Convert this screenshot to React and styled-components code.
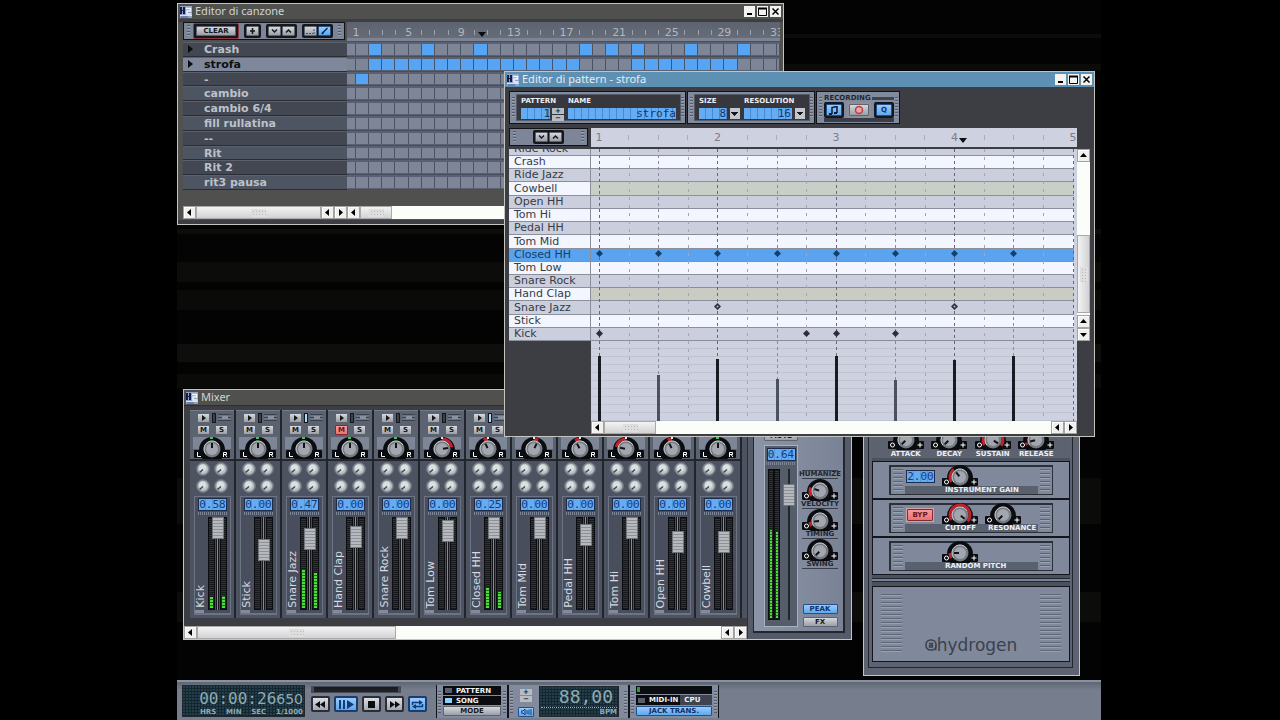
import {useState} from "react"
import styled, {createGlobalStyle, css} from "styled-components"

const COLORS = {
  ink: "#15171c",
  body: "#3d3e43",
  steel: "#7c8698",
  steelDark: "#4d5361",
  edge: "#c3c5be",
  blue: "#56a5f4",
  lcd: "#64adf5",
  lcdInk: "#143a72",
  pale: "#cdd1e0",
  white: "#f3f6fe",
  paper: "#fbfef8",
}

const SONG_ROWS = [
  {name: "Crash", cells: [1, 5, 9, 17, 19, 21, 25, 29], arrow: true},
  {name: "strofa", cells: [...range(1, 17), ...range(21, 29)], arrow: true},
  {name: "-", cells: [0]},
  {name: "cambio", cells: []},
  {name: "cambio 6/4", cells: []},
  {name: "fill rullatina", cells: []},
  {name: "--", cells: []},
  {name: "Rit", cells: []},
  {name: "Rit 2", cells: []},
  {name: "rit3 pausa", cells: []},
]

const INSTRUMENTS = [
  {name: "Ride Rock"},
  {name: "Crash"},
  {name: "Ride Jazz"},
  {name: "Cowbell", tint: "#c8cfc7"},
  {name: "Open HH"},
  {name: "Tom Hi"},
  {name: "Pedal HH"},
  {name: "Tom Mid"},
  {name: "Closed HH", selected: true, notes: [0, 2, 4, 6, 8, 10, 12, 14]},
  {name: "Tom Low"},
  {name: "Snare Rock"},
  {name: "Hand Clap", tint: "#cacbc3"},
  {name: "Snare Jazz", hollow: true, notes: [4, 12]},
  {name: "Stick"},
  {name: "Kick", notes: [0, 7, 8, 10]},
]

const VELOCITIES = [65, 46, 62, 42, 65, 41, 61, 65]

const STRIPS = [
  {name: "Kick", peak: "0.58", fader: 100, meter: [11, 12], pan: 0},
  {name: "Stick", peak: "0.00", fader: 69, meter: [0, 0], pan: 0},
  {name: "Snare Jazz", peak: "0.47", fader: 85, meter: [38, 35], pan: 0, lit: true},
  {name: "Hand Clap", peak: "0.00", fader: 88, meter: [0, 0], pan: 0, muted: true},
  {name: "Snare Rock", peak: "0.00", fader: 100, meter: [0, 0], pan: 0},
  {name: "Tom Low", peak: "0.00", fader: 96, meter: [0, 0], pan: 80},
  {name: "Closed HH", peak: "0.25", fader: 100, meter: [20, 16], pan: -26, lit: true},
  {name: "Tom Mid", peak: "0.00", fader: 100, meter: [0, 0], pan: 26},
  {name: "Pedal HH", peak: "0.00", fader: 90, meter: [0, 0], pan: -30},
  {name: "Tom Hi", peak: "0.00", fader: 100, meter: [0, 0], pan: -78},
  {name: "Open HH", peak: "0.00", fader: 81, meter: [0, 0], pan: -26},
  {name: "Cowbell", peak: "0.00", fader: 81, meter: [0, 0], pan: 0},
]

function range(from, to) {
  return Array.from({length: to - from}, (_, i) => from + i)
}

// point on a circle, 0deg is straight up
function polar(cx, cy, r, deg) {
  const a = ((deg - 90) * Math.PI) / 180
  return [cx + r * Math.cos(a), cy + r * Math.sin(a)]
}

function arc(cx, cy, r, from, to) {
  const [x1, y1] = polar(cx, cy, r, Math.min(from, to))
  const [x2, y2] = polar(cx, cy, r, Math.max(from, to))
  const large = Math.abs(to - from) > 180 ? 1 : 0
  return `M${x1} ${y1}A${r} ${r} 0 ${large} 1 ${x2} ${y2}`
}

function Knob({label, value, pan}) {
  const [x1, y1] = polar(19, 12, 1, value)
  const [x2, y2] = polar(19, 12, 6, value)
  return (
    <KnobBox>
      <svg width="38" height="22" viewBox="0 0 38 22" aria-hidden="true">
        <circle cx="19" cy="13" r="13" fill="#0b0c0f" />
        <rect x="1" y="13" width="9" height="8" rx="1" fill="#0b0c0f" />
        <rect x="28" y="13" width="9" height="8" rx="1" fill="#0b0c0f" />
        {value !== (pan ? 0 : -135) && (
          <path d={arc(19, 12, 10, pan ? 0 : -120, value)} fill="none" stroke="#c3202c" strokeWidth="3" />
        )}
        {pan && value === 0 && <rect x="17" y="0" width="3" height="2" fill="#38d048" />}
        {pan && value !== 0 && <rect x="18" y="0" width="2" height="2" fill="#e8e8e8" />}
        <circle cx="19" cy="12" r="8.500" fill="#767b83" />
        <path d={arc(19, 12, 8, -130, 60)} fill="none" stroke="#c6cad0" strokeWidth="1" />
        <circle cx="19" cy="12" r="6" fill="#a2a7af" />
        <path d={`M${x1} ${y1}L${x2} ${y2}`} stroke="#101216" strokeWidth="2" />
        {pan ? (
          <g fill="none" stroke="#fff" strokeWidth="1">
            <path d="M4.500 15v4.500h3.500" />
            <path d="M30.500 20v-4.500h3v2h-3M32 17.500l2 2.500" />
          </g>
        ) : (
          <g fill="none" stroke="#fff" strokeWidth="1">
            <circle cx="5.500" cy="17" r="2" />
            <path d="M30.500 17h5M33 14.500v5" />
          </g>
        )}
      </svg>
      <KnobInput type="range" min="-135" max="135" defaultValue={value} aria-label={label} />
    </KnobBox>
  )
}

function SmallKnob({label}) {
  return (
    <SmallKnobBox>
      <svg width="14" height="14" viewBox="0 0 14 14" aria-hidden="true">
        <circle cx="7" cy="7" r="6.500" fill="#8b929a" stroke="#6b717b" />
        <circle cx="7" cy="7" r="5" fill="#bcc3c6" />
        <circle cx="6.500" cy="6" r="3.500" fill="#dbe0e1" />
        <path d="M3.500 10.500l3.500-3" stroke="#3c424c" strokeWidth="1.500" />
      </svg>
      <KnobInput type="range" min="0" max="100" defaultValue={0} aria-label={label} />
    </SmallKnobBox>
  )
}

function AppMark() {
  return (
    <svg width="12" height="12" viewBox="0 0 12 12" aria-hidden="true">
      <rect width="12" height="12" fill="#8fa3c8" />
      <path d="M0 1h2v3h1V1h2v7H3V5H2v3H0z" fill="#141c48" />
      <path d="M6 2.500h4.500v2.500H7v3h4.500" stroke="#f4f7ff" strokeWidth="1.500" fill="none" />
      <path d="M0 9.500h12" stroke="#dbe3f2" strokeWidth="1" />
      <path d="M1 11h7" stroke="#4c5f90" strokeWidth="1" />
    </svg>
  )
}

function Caption({title, active, controls}) {
  return (
    <TitleBar $active={active}>
      <AppMark />
      <TitleText>{title}</TitleText>
      {controls && (
        <TitleControls>
          <TitleButton aria-label="Minimize">
            <svg width="11" height="11">
              <path d="M3 8h5" stroke="#000" strokeWidth="2" />
            </svg>
          </TitleButton>
          <TitleButton aria-label="Maximize">
            <svg width="11" height="11">
              <path d="M1 2.500h9" stroke="#000" strokeWidth="2" />
              <path d="M1.500 2v7.500h8V2" fill="none" stroke="#000" />
            </svg>
          </TitleButton>
          <TitleButton aria-label="Close">
            <svg width="11" height="11">
              <path d="M2.500 2.500l6 6M8.500 2.500l-6 6" stroke="#000" strokeWidth="1.500" />
            </svg>
          </TitleButton>
        </TitleControls>
      )}
    </TitleBar>
  )
}

const ARROWS = {
  left: "M8 3v7L4 6.500z",
  right: "M5 3v7l4-3.500z",
  up: "M3 8h7L6.500 4z",
  down: "M3 5h7L6.500 9z",
}

function ScrollArrow({dir}) {
  return (
    <ScrollButton aria-label={`Scroll ${dir}`}>
      <svg width="13" height="13" viewBox="0 0 13 13">
        <path d={ARROWS[dir]} fill="#000" />
      </svg>
    </ScrollButton>
  )
}

function ScrollBar({before = 0, thumb, vertical}) {
  return (
    <ScrollTrack $vertical={vertical}>
      <ScrollArrow dir={vertical ? "up" : "left"} />
      <ScrollGap $size={before} />
      <ScrollThumb $size={thumb} $vertical={vertical}>
        <Grip $vertical={vertical} />
      </ScrollThumb>
      <ScrollFill />
      <ScrollArrow dir={vertical ? "up" : "left"} />
      <ScrollArrow dir={vertical ? "down" : "right"} />
    </ScrollTrack>
  )
}

function UpDown() {
  return (
    <ButtonWell>
      <PixelButton $width={13} aria-label="Move down">
        <svg width="7" height="6">
          <path d="M1 1.500l2.500 2.500l2.500-2.500" fill="none" stroke="#15171c" strokeWidth="1.500" />
        </svg>
      </PixelButton>
      <PixelButton $width={13} aria-label="Move up">
        <svg width="7" height="6">
          <path d="M1 4.500l2.500-2.500l2.500 2.500" fill="none" stroke="#15171c" strokeWidth="1.500" />
        </svg>
      </PixelButton>
    </ButtonWell>
  )
}

function SongEditor() {
  const [selected, setSelected] = useState("strofa")
  return (
    <SongWindow>
      <Caption title="Editor di canzone" controls />
      <SongBody>
        <SongTools>
          <ButtonWell $red>
            <PixelButton $width={40}>CLEAR</PixelButton>
          </ButtonWell>
          <ButtonWell>
            <PixelButton $width={13} aria-label="New pattern">
              <svg width="7" height="6">
                <path d="M3.500 0v6M1 3h5" stroke="#15171c" strokeWidth="1.500" />
              </svg>
            </PixelButton>
          </ButtonWell>
          <UpDown />
          <ButtonWell>
            <PixelButton $width={13} aria-label="Select mode">
              <svg width="9" height="7">
                <path d="M0 5.500h7M8 1v5" stroke="#4a505c" strokeDasharray="2 1" />
              </svg>
            </PixelButton>
            <PixelButton $width={13} $on aria-label="Draw mode">
              <svg width="9" height="8">
                <path d="M7.500 1L3.500 5" stroke="#0d2550" strokeWidth="1.500" />
                <path d="M3.500 5L2 7" stroke="#0d2550" strokeWidth="2" />
              </svg>
            </PixelButton>
          </ButtonWell>
        </SongTools>
        <SongRuler>
          <i />
          {range(0, 33).map((i) => (
            <RulerCell key={i}>
              {i % 4 === 0 ? <RulerNumber>{i + 1}</RulerNumber> : <RulerTick />}
              {i === 9 && <Playhead />}
            </RulerCell>
          ))}
        </SongRuler>
        <SongNames>
          {SONG_ROWS.map((row) => (
            <SongName key={row.name} $selected={row.name === selected} onClick={() => setSelected(row.name)}>
              <svg width="8" height="8">
                {row.arrow && <path d="M2 0v8l5-4z" fill="#0b0c0f" />}
              </svg>
              {row.name}
            </SongName>
          ))}
        </SongNames>
        <SongGrid>
          {SONG_ROWS.map((row) => (
            <SongLine key={row.name}>
              <SongCell />
              {range(0, 32).map((i) => (
                <SongCell key={i} $on={row.cells.includes(i)} />
              ))}
              <SongCell />
            </SongLine>
          ))}
        </SongGrid>
        <i />
        <i />
        <ScrollBar thumb={125} />
        <ScrollBar thumb={32} />
      </SongBody>
    </SongWindow>
  )
}

const STEP = 29.6
const BEAT_START = 8

function PatternLines({height}) {
  return (
    <Overlay width="100%" height={height} aria-hidden="true">
      {range(0, 17).map((i) => (
        <path
          key={i}
          d={`M${Math.round(BEAT_START + i * STEP) + 0.5} 0V${height}`}
          stroke={i % 4 === 0 ? "#67657f" : i % 2 === 0 ? "#8b899e" : "#a5a4b6"}
          strokeDasharray={i % 2 === 0 ? "3 3" : "3 5"}
        />
      ))}
    </Overlay>
  )
}

function PatternEditor() {
  return (
    <PatternWindow>
      <Caption title="Editor di pattern - strofa" active controls />
      <PatternBody>
        <PatternTools>
          <Rack>
            <RackInset>
              <Field>
                <PixelLabel htmlFor="pattern-number">PATTERN</PixelLabel>
                <FieldRow>
                  <LcdInput id="pattern-number" $width={29} defaultValue="1" />
                  <Spinner />
                </FieldRow>
              </Field>
              <Field>
                <PixelLabel htmlFor="pattern-name">NAME</PixelLabel>
                <LcdInput id="pattern-name" $width={108} defaultValue="strofa" />
              </Field>
            </RackInset>
          </Rack>
          <Rack>
            <RackInset>
              <Field>
                <PixelLabel htmlFor="size">SIZE</PixelLabel>
                <LcdSelect id="size" $width={41}>
                  <option>8</option>
                </LcdSelect>
              </Field>
              <Field>
                <PixelLabel htmlFor="resolution">RESOLUTION</PixelLabel>
                <LcdSelect id="resolution" $width={61}>
                  <option>16</option>
                </LcdSelect>
              </Field>
            </RackInset>
          </Rack>
          <Rack>
            <Recording>
              <RecordingTitle>RECORDING</RecordingTitle>
              <RecordingButtons>
                <ButtonWell>
                  <PixelButton $width={16} $tall $on aria-label="Hear new notes">
                    <svg width="10" height="9">
                      <path d="M3 8V1.500l5-1V7" fill="none" stroke="#0b1838" strokeWidth="1.500" />
                      <path d="M0 7h3v2H0zM5 6h3v2H5z" fill="#0b1838" />
                    </svg>
                  </PixelButton>
                </ButtonWell>
                <ButtonWell $light>
                  <PixelButton $width={20} $tall aria-label="Record">
                    <svg width="10" height="10">
                      <circle cx="5" cy="5" r="3.500" fill="#e2a9ac" stroke="#c43a44" strokeWidth="1.500" />
                    </svg>
                  </PixelButton>
                </ButtonWell>
                <ButtonWell>
                  <PixelButton $width={16} $tall $on>
                    Q
                  </PixelButton>
                </ButtonWell>
              </RecordingButtons>
            </Recording>
          </Rack>
        </PatternTools>
        <PatternGrid>
          <PatternMove>
            <UpDown />
          </PatternMove>
          <PatternRuler>
            {range(0, 17).map((i) => (
              <RulerCell key={i}>
                {i % 4 === 0 ? <RulerNumber $dark>{i / 4 + 1}</RulerNumber> : <RulerTick $dark />}
                {i === 12 && <Playhead />}
              </RulerCell>
            ))}
          </PatternRuler>
          <i />
          <InstrumentRows>
            {INSTRUMENTS.map((ins, i) => (
              <InstrumentName key={ins.name} $odd={i % 2 === 1} $selected={ins.selected}>
                {ins.name}
              </InstrumentName>
            ))}
          </InstrumentRows>
          <NoteArea>
            {INSTRUMENTS.map((ins, i) => (
              <NoteRow key={ins.name} $odd={i % 2 === 1} $selected={ins.selected} $tint={ins.tint} />
            ))}
            <PatternLines height={192} />
            <Overlay width="100%" height="192" aria-hidden="true">
              {INSTRUMENTS.map((ins, row) =>
                (ins.notes || []).map((n) => {
                  const x = Math.round(BEAT_START + n * STEP)
                  const y = Math.round(6 + (row - 1) * 13.2 + 6)
                  return (
                    <g key={`${row}-${n}`}>
                      <path
                        d={`M${x - 3} ${y + 0.5}l3.500-3.500l3.500 3.500l-3.500 3.500z`}
                        fill={ins.selected ? "#14406e" : "#2b2e3c"}
                      />
                      {ins.hollow && <circle cx={x + 0.5} cy={y + 0.5} r="1" fill="#b9bcd0" />}
                    </g>
                  )
                }),
              )}
            </Overlay>
          </NoteArea>
          <ScrollBar vertical before={73} thumb={78} />
          <i />
          <VelocityArea>
            <PatternLines height={80} />
            <Overlay width="100%" height="80" aria-hidden="true">
              {VELOCITIES.map((v, i) => (
                <rect
                  key={i}
                  x={Math.round(BEAT_START + i * 2 * STEP) - 1}
                  y={80 - v}
                  width="3"
                  height={v}
                  fill={v > 50 ? "#171b22" : "#4a525d"}
                />
              ))}
            </Overlay>
          </VelocityArea>
          <i />
          <i />
          <ScrollBar thumb={52} />
        </PatternGrid>
      </PatternBody>
    </PatternWindow>
  )
}

function Spinner() {
  return (
    <SpinnerBox>
      <SpinButton aria-label="Increase">+</SpinButton>
      <SpinButton aria-label="Decrease">−</SpinButton>
    </SpinnerBox>
  )
}

function ChannelStrip({strip}) {
  return (
    <Strip>
      <StripTop>
        <StripButtons>
          <PixelButton $width={13} aria-label={`Play ${strip.name}`}>
            <svg width="5" height="6">
              <path d="M1 0v6l4-3z" fill="#15171c" />
            </svg>
          </PixelButton>
          <Led $on={strip.lit} />
          <Vent />
        </StripButtons>
        <StripButtons $spread>
          <PixelButton $width={13} $red={strip.muted}>
            M
          </PixelButton>
          <PixelButton $width={13}>S</PixelButton>
        </StripButtons>
        <PanArea>
          <Knob pan value={strip.pan} label={`Pan ${strip.name}`} />
        </PanArea>
      </StripTop>
      <SendKnobs>
        {range(1, 5).map((n) => (
          <SmallKnob key={n} label={`${strip.name} send ${n}`} />
        ))}
      </SendKnobs>
      <FaderFrame>
        <Lcd>{strip.peak}</Lcd>
        <Dots />
        <FaderRow>
          <StripName>{strip.name}</StripName>
          <MeterPair>
            <Meter>
              <MeterLevel style={{height: strip.meter[0]}} />
            </Meter>
            <Meter>
              <MeterLevel style={{height: strip.meter[1]}} />
            </Meter>
            <Fader type="range" defaultValue={strip.fader} aria-label={`Volume ${strip.name}`} />
          </MeterPair>
        </FaderRow>
      </FaderFrame>
    </Strip>
  )
}

function Mixer() {
  return (
    <MixerWindow>
      <Caption title="Mixer" />
      <MixerBody>
        <MixerMain>
          <Strips>
            {STRIPS.map((strip) => (
              <ChannelStrip key={strip.name} strip={strip} />
            ))}
          </Strips>
          <ScrollBar thumb={199} />
        </MixerMain>
        <MasterFrame>
          <MasterPanel>
            <MasterLeft>
              <PixelButton $width={34}>MUTE</PixelButton>
              <MasterFader>
                <Lcd>0.64</Lcd>
                <Dots />
                <MasterMeters>
                  <Meter $tall>
                    <MeterLevel style={{height: 88}} />
                  </Meter>
                  <Meter $tall>
                    <MeterLevel style={{height: 86}} />
                  </Meter>
                  <MasterSlot>
                    <Fader $tall type="range" defaultValue={88} aria-label="Master volume" />
                  </MasterSlot>
                </MasterMeters>
              </MasterFader>
            </MasterLeft>
            <MasterRight>
              <HumanLabel $first>HUMANIZE</HumanLabel>
              <Knob value={-70} label="Humanize velocity" />
              <HumanLabel>VELOCITY</HumanLabel>
              <Knob value={-95} label="Humanize timing" />
              <HumanLabel>TIMING</HumanLabel>
              <Knob value={-135} label="Swing" />
              <HumanLabel>SWING</HumanLabel>
              <MasterButtons>
                <PixelButton $width={35} $on>
                  PEAK
                </PixelButton>
                <PixelButton $width={35}>FX</PixelButton>
              </MasterButtons>
            </MasterRight>
          </MasterPanel>
        </MasterFrame>
      </MixerBody>
    </MixerWindow>
  )
}

const ENVELOPE = [
  ["ATTACK", -135],
  ["DECAY", -135],
  ["SUSTAIN", 125],
  ["RELEASE", -105],
]

function KnobField({label, value}) {
  return (
    <KnobColumn>
      <Knob value={value} label={label} />
      <UnitLabel>{label}</UnitLabel>
    </KnobColumn>
  )
}

function InstrumentEditor() {
  return (
    <InstrumentWindow>
      <InstrumentInner>
        <EnvelopeUnit>
          {ENVELOPE.map(([label, value]) => (
            <EnvelopeField key={label}>
              <Knob value={value} label={label} />
              <UnitLabel>{label}</UnitLabel>
            </EnvelopeField>
          ))}
        </EnvelopeUnit>
        <Unit>
          <UnitInset>
            <UnitSlot>
              <Lcd>2.00</Lcd>
            </UnitSlot>
            <KnobField label="INSTRUMENT GAIN" value={-40} />
          </UnitInset>
        </Unit>
        <Unit>
          <UnitInset>
            <UnitSlot>
              <BypassWell>
                <PixelButton $width={26} $tall $red>
                  BYP
                </PixelButton>
              </BypassWell>
            </UnitSlot>
            <KnobField label="CUTOFF" value={130} />
            <KnobField label="RESONANCE" value={-135} />
          </UnitInset>
        </Unit>
        <Unit>
          <UnitInset>
            <UnitSlot />
            <KnobField label="RANDOM PITCH" value={-90} />
          </UnitInset>
        </Unit>
        <Groove />
        <LogoUnit>
          <LogoVent />
          <Logo>
            <svg width="12" height="12" viewBox="0 0 12 12" aria-hidden="true">
              <rect x="1" y="1" width="10" height="10" rx="4.500" fill="none" stroke="#3b414d" strokeWidth="1.500" />
              <path d="M4 4.500h3.500V8h-3V6.300h3M10.800 6v5.500" fill="none" stroke="#3b414d" strokeWidth="1.300" />
            </svg>
            hydrogen
          </Logo>
          <LogoVent />
        </LogoUnit>
      </InstrumentInner>
    </InstrumentWindow>
  )
}

function Player() {
  const [mode, setMode] = useState("SONG")
  return (
    <PlayerBar>
      <TimeDisplay>
        <TimeDigits>
          00:00:26<small>650</small>
        </TimeDigits>
        <TimeUnits>
          <span>HRS</span>
          <span>MIN</span>
          <span>SEC</span>
          <span>1/1000</span>
        </TimeUnits>
      </TimeDisplay>
      <Transport>
        <TransportGroove />
        <TransportButtons>
          <TransportButton aria-label="Rewind">
            <svg width="11" height="7">
              <path d="M5 0v7L0 3.500zM10 0v7L5 3.500z" fill="#0b0c0f" />
            </svg>
          </TransportButton>
          <TransportButton $on $wide aria-label="Play">
            <svg width="16" height="9">
              <path d="M1 0h2v9H1zM5 0h2v9H5zM9 0v9l7-4.500z" fill="#123a78" />
            </svg>
          </TransportButton>
          <TransportButton aria-label="Stop">
            <svg width="7" height="7">
              <path d="M0 0h7v7H0z" fill="#0b0c0f" />
            </svg>
          </TransportButton>
          <TransportButton aria-label="Forward">
            <svg width="11" height="7">
              <path d="M1 0v7l5-3.500zM6 0v7l5-3.500z" fill="#0b0c0f" />
            </svg>
          </TransportButton>
          <TransportButton $on aria-label="Loop">
            <svg width="13" height="9" viewBox="0 0 13 9">
              <path d="M1.500 5V2.500H9M11.500 4v2.500H4" fill="none" stroke="#123a78" strokeWidth="1.500" />
              <path d="M8 0l4 2.500L8 5zM5 4v5L1 6.500z" fill="#123a78" />
            </svg>
          </TransportButton>
        </TransportButtons>
      </Transport>
      <PlayerRack>
        <ModeRow>
          <Lamp />
          PATTERN
        </ModeRow>
        <ModeRow>
          <Lamp $on={mode === "SONG"} />
          SONG
        </ModeRow>
        <PixelButton $width={58} onClick={() => setMode(mode === "SONG" ? "PATTERN" : "SONG")}>
          MODE
        </PixelButton>
      </PlayerRack>
      <TempoRack>
        <TempoButtons>
          <Spinner />
          <PixelButton $width={16} $on aria-label="Metronome">
            <svg width="11" height="8">
              <path d="M0 3h2l2-2v6L2 5H0zM6 2v4M8 1.500v5M10 1v6" fill="none" stroke="#123a78" />
            </svg>
          </PixelButton>
        </TempoButtons>
        <TempoDisplay>
          <TempoDigits>88,00</TempoDigits>
          <span>BPM</span>
        </TempoDisplay>
      </TempoRack>
      <PlayerRack>
        <CpuMeter>
          <i />
        </CpuMeter>
        <MidiRow>
          <MidiLamp>
            <Lamp />
            MIDI-IN
          </MidiLamp>
          CPU
        </MidiRow>
        <PixelButton $width={76} $on>
          JACK TRANS.
        </PixelButton>
      </PlayerRack>
    </PlayerBar>
  )
}

export default function App() {
  return (
    <Page>
      <GlobalStyle />
      <Desktop>
        <SongEditor />
        <Mixer />
        <InstrumentEditor />
        <PatternEditor />
        <Player />
      </Desktop>
    </Page>
  )
}

const GlobalStyle = createGlobalStyle`
  *, *::before, *::after {
    box-sizing: border-box;
  }
  body {
    margin: 0;
    background: #000;
    font-family: "DejaVu Sans", sans-serif;
    font-size: 11px;
  }
  button, input, select {
    font: inherit;
    margin: 0;
    padding: 0;
    border: 0;
  }
  svg {
    display: block;
    flex: none;
  }
`

const pixelType = css`
  font-family: "DejaVu Sans", sans-serif;
  font-size: 7px;
  font-weight: 700;
  line-height: 8px;
`

const Page = styled.main`
  padding-right: 2px;
`

const Desktop = styled.div`
  position: relative;
  display: flex;
  flex-direction: column;
  justify-content: flex-end;
  max-width: 924px;
  min-height: 100vh;
  margin: 0 auto;
  overflow: hidden;
  background: linear-gradient(
    #030303 0 34px,
    #0c0c0b 34px 38px,
    #030303 38px 64px,
    #0b0b0a 64px 70px,
    #030303 70px 229px,
    #0d0d0c 229px 234px,
    #040404 234px 262px,
    #0c0c0b 262px 282px,
    #030303 282px 290px,
    #0a0a09 290px 310px,
    #030303 310px 344px,
    #0e0e0c 344px 362px,
    #030303 362px 374px,
    #0a0a09 374px 388px,
    #030303 388px 478px,
    #0b0b0a 478px 524px,
    #030303 524px 592px,
    #0c0c0b 592px 622px,
    #030303 622px
  );
`

/* windows */

const Window = styled.section`
  position: absolute;
  border: 1px solid ${COLORS.edge};
  background: ${COLORS.body};
`

const SongWindow = styled(Window)`
  left: 0;
  top: 3px;
  width: 607px;
`

const PatternWindow = styled(Window)`
  left: 327px;
  top: 71px;
  width: 591px;
`

const MixerWindow = styled(Window)`
  left: 6px;
  top: 389px;
  width: 669px;
`

const InstrumentWindow = styled(Window)`
  left: 686px;
  top: 420px;
  width: 217px;
  padding: 0 6px 7px 4px;
  background: #5d6370;
`

const TitleBar = styled.header`
  display: flex;
  align-items: center;
  gap: 3px;
  height: 15px;
  padding: 0 2px;
  color: ${(_) => (_.$active ? "#e2edf6" : "#d2d3d0")};
  background: ${(_) => (_.$active ? "#5d90b3" : "#50514e")};
`

const TitleText = styled.h2`
  flex: 1;
  margin: 0;
  padding-bottom: 2px;
  font-family: "Noto Sans", sans-serif;
  font-size: 11px;
  line-height: 13px;
  font-weight: 400;
`

const TitleControls = styled.div`
  display: flex;
  gap: 2px;
`

const TitleButton = styled.button`
  width: 11px;
  height: 11px;
  background: #f2f3ee;
`

/* shared controls */

const ButtonWell = styled.span`
  display: flex;
  gap: 1px;
  padding: 2px;
  border-radius: 2px;
  background: ${(_) => (_.$light ? "#8b8f98" : COLORS.ink)};
  ${(_) => _.$red && "border: 1px solid #8c3644;"}
`

const PixelButton = styled.button`
  ${pixelType}
  display: flex;
  flex: none;
  justify-content: center;
  align-items: center;
  width: ${(_) => _.$width}px;
  height: ${(_) => (_.$tall ? 12 : 10)}px;
  color: ${(_) => (_.$on ? "#0f3166" : _.$red ? "#6d1118" : "#15171c")};
  background: ${(_) =>
    _.$on
      ? "linear-gradient(#9acbfb, #5ea8ee)"
      : _.$red
        ? "linear-gradient(#f79a9a, #e87474)"
        : "linear-gradient(#d5d8dd, #9a9ea6)"};
  border: 1px solid ${(_) => (_.$on ? "#24508a" : _.$red ? "#8a2830" : "#5e636d")};
  border-radius: 1px;
`

const ScrollTrack = styled.div`
  display: flex;
  flex-direction: ${(_) => (_.$vertical ? "column" : "row")};
  min-width: 0;
  height: ${(_) => (_.$vertical ? "auto" : "13px")};
  background: ${COLORS.paper};
`

const ScrollButton = styled.button`
  flex: none;
  width: 13px;
  height: 13px;
  background: #f0f0ee;
  box-shadow: inset 0 0 0 1px #a3a3a3, inset 1px 1px 0 1px #fff;
`

const ScrollGap = styled.span`
  flex: none;
  flex-basis: ${(_) => _.$size}px;
`

const ScrollThumb = styled.span`
  display: flex;
  align-items: center;
  justify-content: center;
  flex: none;
  flex-basis: ${(_) => _.$size}px;
  background: linear-gradient(${(_) => (_.$vertical ? "90deg" : "180deg")}, #f6f6f6, #cfcfd1);
  box-shadow: inset 0 0 0 1px #a9a9a9;
`

const ScrollFill = styled.span`
  flex: 1;
`

const Grip = styled.span`
  width: ${(_) => (_.$vertical ? 8 : 15)}px;
  height: ${(_) => (_.$vertical ? 15 : 8)}px;
  background: repeating-linear-gradient(#dededf 0 2px, transparent 2px 3px),
    repeating-linear-gradient(90deg, #dededf 0 2px, #b9b9bc 2px 3px);
`

const ribs = css`
  background-image: repeating-linear-gradient(#535b6a 0 1px, #98a1b1 1px 2px, transparent 2px 3px),
    repeating-linear-gradient(#535b6a 0 1px, #98a1b1 1px 2px, transparent 2px 3px);
  background-repeat: no-repeat;
`

const Rack = styled.div`
  ${ribs}
  padding: 3px 5px 3px 7px;
  border: 1px solid #101216;
  background-color: #818b9d;
  background-size: 3px 21px;
  background-position: 2px center, calc(100% - 1px) center;
`

const RackInset = styled.div`
  display: flex;
  gap: 4px;
  height: 25px;
  padding: 2px 4px;
  background: #36383e;
  box-shadow: 0 0 0 1px #565d6a;
`

const Lcd = styled.output`
  display: block;
  width: 29px;
  height: 13px;
  border: 1px solid #1c2c4a;
  background: repeating-linear-gradient(90deg, ${COLORS.lcd} 0 6px, #5398df 6px 7px);
  color: ${COLORS.lcdInk};
  font: 11px/11px "DejaVu Sans Mono", monospace;
  text-align: center;
`

const LcdInput = styled.input`
  width: ${(_) => _.$width}px;
  height: 11px;
  background: repeating-linear-gradient(90deg, ${COLORS.lcd} 0 6px, #4a88cf 6px 7px);
  color: #13376b;
  font: 11px/11px "DejaVu Sans Mono", monospace;
  text-align: right;
  border-radius: 0;
`

const LcdSelect = styled.select`
  appearance: none;
  width: ${(_) => _.$width}px;
  height: 11px;
  padding-right: 14px;
  border-radius: 0;
  background: linear-gradient(135deg, #15171c 50%, transparent 50%) calc(100% - 1px) 4px / 4px 4px no-repeat,
    linear-gradient(225deg, #15171c 50%, transparent 50%) calc(100% - 5px) 4px / 4px 4px no-repeat,
    linear-gradient(#c4c7cd, #c4c7cd) 100% 0 / 10px 11px no-repeat,
    linear-gradient(#36383e, #36383e) 100% 0 / 13px 11px no-repeat,
    repeating-linear-gradient(90deg, ${COLORS.lcd} 0 6px, #4a88cf 6px 7px);
  color: #13376b;
  font: 11px/11px "DejaVu Sans Mono", monospace;
  text-align: right;
  text-align-last: right;
`

const SpinnerBox = styled.span`
  display: flex;
  flex-direction: column;
  gap: 1px;
  width: 12px;
`

const SpinButton = styled.button`
  height: 6px;
  background: #b9bcc3;
  color: #15171c;
  font-size: 7px;
  font-weight: 700;
  line-height: 6px;
  text-align: center;
`

const KnobBox = styled.span`
  position: relative;
  display: block;
  flex: none;
  width: 38px;
  height: 22px;
`

const SmallKnobBox = styled.span`
  position: relative;
  display: block;
  width: 14px;
  height: 14px;
`

const KnobInput = styled.input`
  position: absolute;
  inset: 0;
  width: 100%;
  height: 100%;
  opacity: 0;
`

const RulerCell = styled.span`
  position: relative;
  display: flex;
  justify-content: center;
  align-items: center;
  width: 0;
`

const RulerNumber = styled.span`
  flex: none;
  font-size: 11px;
  line-height: 14px;
  color: ${(_) => (_.$dark ? "#7b7e8a" : "#b1b6c0")};
`

const RulerTick = styled.i`
  flex: none;
  width: 1px;
  height: 5px;
  background: ${(_) => (_.$dark ? "#a9adbb" : "#9ba1ad")};
`

const Playhead = styled.i`
  position: absolute;
  left: 4px;
  bottom: 4px;
  border: solid transparent;
  border-width: 5px 4px 0;
  border-top-color: #0b0c0f;
`

const Overlay = styled.svg`
  position: absolute;
  inset: 0;
`

/* song editor */

const SongBody = styled.div`
  display: grid;
  grid-template-columns: 164px minmax(0, 1fr);
  grid-template-rows: 20px 148px 16px 14px;
  padding: 3px 3px 4px 5px;
  background: linear-gradient(#3d3e43 0 3px, transparent 3px calc(100% - 4px), #3d3e43 0), #50514e;
`

const SongTools = styled.div`
  ${ribs}
  display: flex;
  align-items: center;
  gap: 5px;
  height: 18px;
  margin-right: 2px;
  padding-left: 9px;
  border: 1px solid #101216;
  background-color: ${COLORS.steel};
  background-size: 3px 12px;
  background-position: 3px center, calc(100% - 3px) center;
`

const songTracks = css`
  display: grid;
  grid-template-columns: 9px repeat(32, minmax(0, 1fr)) 3px;
`

const SongRuler = styled.div`
  ${songTracks}
  height: 19px;
  padding-top: 2px;
  overflow: hidden;
  background: linear-gradient(#5c626e, #666c78 16px, #7c8493 16px);
`

const SongNames = styled.div`
  display: grid;
  grid-template-rows: repeat(10, minmax(0, 1fr));
`

const SongName = styled.button`
  display: flex;
  align-items: center;
  gap: 10px;
  padding-left: 3px;
  border-bottom: 1px solid #2a2d35;
  border-top: 1px solid #5a606c;
  overflow: hidden;
  color: ${(_) => (_.$selected ? "#0d0f14" : "#bcc1ca")};
  background: ${(_) => (_.$selected ? "#7f889a" : "#424751")};
  font-size: 11px;
  font-weight: 700;
  text-align: left;
  &:nth-child(n + 4):nth-child(even) {
    background: #4d5462;
  }
`

const SongGrid = styled(SongNames)`
  background: #596071;
`

const SongLine = styled.div`
  ${songTracks}
  padding: 2px 0 1px;
  border-bottom: 1px solid #474d5a;
`

const SongCell = styled.i`
  border-right: 1px solid #4b5262;
  background: ${(_) => (_.$on ? COLORS.blue : "#7d8596")};
`

/* pattern editor */

const PatternBody = styled.div`
  padding: 4px 4px 1px;
`

const PatternTools = styled.div`
  display: flex;
  gap: 1px;
  height: 33px;
  margin-bottom: 4px;
`

const Field = styled.div`
  display: flex;
  flex-direction: column;
  gap: 3px;
`

const FieldRow = styled.div`
  display: flex;
  gap: 2px;
`

const PixelLabel = styled.label`
  ${pixelType}
  color: #eceef2;
`

const Recording = styled.div`
  display: flex;
  flex-direction: column;
  width: 70px;
  height: 27px;
  border-bottom: 4px solid #3a3d45;
`

const RecordingTitle = styled.span`
  ${pixelType}
  color: #23262d;
  margin-top: -1px;
  background: linear-gradient(#3f444e, #3f444e) 100% 3px / 22px 3px no-repeat;
`

const RecordingButtons = styled.div`
  display: flex;
  justify-content: space-between;
`

const PatternGrid = styled.div`
  display: grid;
  grid-template-columns: 82px minmax(0, 1fr) 13px;
  grid-template-rows: 21px 192px 80px 14px;
`

const PatternMove = styled.div`
  ${ribs}
  display: flex;
  align-items: center;
  justify-content: center;
  height: 18px;
  margin-right: 3px;
  border: 1px solid #101216;
  background-color: ${COLORS.steel};
  background-size: 3px 12px;
  background-position: 3px center, calc(100% - 3px) center;
`

const PatternRuler = styled.div`
  display: grid;
  grid-template-columns: repeat(16, minmax(0, 1fr)) 4px;
  height: 19px;
  padding-left: 8px;
  overflow: hidden;
  background: ${COLORS.pale};
`

const InstrumentRows = styled.div`
  display: grid;
  grid-template-rows: 7px repeat(14, minmax(0, 1fr));
`

const rowColor = (_) => (_.$selected ? "#5aa3ee" : _.$tint ? _.$tint : _.$odd ? COLORS.white : "#cbcfdd")

const InstrumentName = styled.div`
  display: flex;
  align-items: flex-end;
  overflow: hidden;
  padding-left: 5px;
  border-bottom: 1px solid #8b8f9c;
  border-right: 1px solid #8b8f9c;
  background: ${rowColor};
  color: ${(_) => (_.$selected ? "#12406e" : "#373b46")};
  font-size: 11px;
  line-height: 12px;
`

const NoteArea = styled(InstrumentRows)`
  position: relative;
  background: ${COLORS.pale};
`

const NoteRow = styled.div`
  margin-right: 3px;
  border-bottom: 1px solid #8b8f9c;
  background: ${rowColor};
`

const VelocityArea = styled.div`
  position: relative;
  background: repeating-linear-gradient(${COLORS.pale} 0 7px, #bfc4d1 7px 8px);
`

/* mixer */

const MixerBody = styled.div`
  display: flex;
  border-top: 1px solid #2c2e33;
`

const MixerMain = styled.div`
  display: flex;
  flex: 1;
  flex-direction: column;
  justify-content: space-between;
  min-width: 0;
`

const Strips = styled.div`
  display: flex;
  padding: 4px 0 0 6px;
  background: linear-gradient(${COLORS.steelDark}, ${COLORS.steelDark}) 100% 4px / 8px 208px no-repeat;
`

const Strip = styled.div`
  display: flex;
  flex-direction: column;
  width: 46px;
  height: 208px;
  border-right: 2px solid #22252c;
  background: ${COLORS.steelDark};
`

const StripTop = styled.div`
  display: flex;
  flex-direction: column;
  gap: 2px;
  height: 51px;
  padding: 2px 3px 0;
  border-top: 1px solid #747c8b;
  border-bottom: 2px solid #23262d;
  background: #5b6270;
`

const StripButtons = styled.div`
  display: flex;
  gap: ${(_) => (_.$spread ? 5 : 2)}px;
  padding-left: 4px;
`

const Led = styled.i`
  width: 4px;
  height: 10px;
  border: 1px solid #14161b;
  background: ${(_) => (_.$on ? "#a6dcff" : "#3b4049")};
`

const Vent = styled.i`
  flex: 1;
  height: 7px;
  margin-top: 1px;
  background: linear-gradient(#8a92a1, #8a92a1) center / 6px 3px no-repeat,
    repeating-linear-gradient(#3b414c 0 1px, #6d7584 1px 3px);
`

const PanArea = styled.div`
  display: flex;
  justify-content: center;
  background: linear-gradient(#7d8697 0 12px, #5b6270 12px);
`

const SendKnobs = styled.div`
  display: grid;
  grid-template-columns: 14px 14px;
  gap: 2px 4px;
  padding: 1px 0 2px 6px;
  height: 34px;
`

const FaderFrame = styled.div`
  display: flex;
  flex-direction: column;
  align-items: center;
  width: 37px;
  height: 119px;
  margin: 1px 0 0 4px;
  padding-top: 1px;
  border: 1px solid #6c7483;
  border-bottom-width: 2px;
  background: linear-gradient(#828b9c, #828b9c) 0 100% / 9px 3px no-repeat, #484e5b;
`

const Dots = styled.i`
  width: 30px;
  height: 3px;
  margin: 1px 0 2px;
  background: repeating-linear-gradient(90deg, #7c8596 0 1px, transparent 1px 2px);
`

const FaderRow = styled.div`
  display: flex;
  align-items: flex-end;
  gap: 1px;
  align-self: flex-start;
`

const StripName = styled.span`
  writing-mode: vertical-rl;
  transform: rotate(180deg);
  width: 12px;
  margin-bottom: 2px;
  line-height: 12px;
  font-size: 11px;
  color: #d6dae2;
  white-space: nowrap;
`

const MeterPair = styled.div`
  position: relative;
  display: flex;
  justify-content: space-between;
  width: 19px;
  height: 93px;
  background: linear-gradient(90deg, #14161b 1px, #868d9a 1px 2px, #14161b 2px) center / 3px 100% no-repeat;
`

const Meter = styled.div`
  display: flex;
  align-items: flex-end;
  width: ${(_) => (_.$tall ? 6 : 7)}px;
  height: ${(_) => (_.$tall ? 151 : 93)}px;
  padding: 1px;
  border: 1px solid #0c0d10;
  background: repeating-linear-gradient(#17191d 0 1px, #2f3237 1px 2px);
`

const MeterLevel = styled.i`
  width: 100%;
  background: repeating-linear-gradient(0deg, #4fdc3c 0 2px, #1f6d1d 2px 3px);
`

const Fader = styled.input`
  position: absolute;
  left: 50%;
  top: 0;
  width: 12px;
  height: ${(_) => (_.$tall ? 151 : 93)}px;
  margin-left: -6px;
  appearance: none;
  background: none;
  writing-mode: vertical-lr;
  direction: rtl;
  &::-webkit-slider-runnable-track {
    width: 12px;
    background: none;
  }
  &::-webkit-slider-thumb {
    appearance: none;
    width: 12px;
    height: 22px;
    border: 1px solid #70747b;
    background: repeating-linear-gradient(#b6b9be 0 2px, #8d9097 2px 3px);
  }
`

const MasterFrame = styled.div`
  display: flex;
  width: 104px;
  height: 233px;
  padding: 0 6px 6px 5px;
  background: #555b68;
  border-left: 1px solid #2c2f36;
`

const MasterPanel = styled.div`
  display: flex;
  flex: 1;
  gap: 4px;
  padding: 25px 2px 4px 10px;
  border: solid #23262d;
  border-width: 0 2px 2px 1px;
  background: linear-gradient(90deg, #8b95a7, #7a8395);
`

const MasterLeft = styled.div`
  display: flex;
  flex-direction: column;
  gap: 4px;
  width: 34px;
`

const MasterFader = styled.div`
  display: flex;
  flex-direction: column;
  align-items: center;
  height: 182px;
  padding-top: 2px;
  border: 1px solid #a9b1be;
  background: #555c6a;
`

const MasterMeters = styled.div`
  display: flex;
  padding: 2px 0 0;
`

const MasterSlot = styled.div`
  position: relative;
  width: 12px;
  height: 151px;
  margin-left: 3px;
  background: linear-gradient(#22252c, #22252c) center / 2px 100% no-repeat;
`

const MasterRight = styled.div`
  display: flex;
  flex-direction: column;
  align-items: center;
  width: 36px;
  padding-top: 39px;
`

const HumanLabel = styled.span`
  ${pixelType}
  display: flex;
  justify-content: center;
  width: 36px;
  line-height: 7px;
  color: #23262d;
  border-top: ${(_) => (_.$first ? "1px solid #3a3f49" : "0")};
  border-bottom: 1px solid #3a3f49;
`

const MasterButtons = styled.div`
  display: flex;
  flex-direction: column;
  gap: 3px;
  margin-top: auto;
`

/* instrument editor */

const InstrumentInner = styled.div`
  padding: 0 2px 5px 3px;
  border: solid #23262d;
  border-width: 0 1px 1px;
`

const EnvelopeUnit = styled.div`
  display: flex;
  justify-content: space-around;
  height: 40px;
  padding: 7px 12px 0;
  background: #5c6270;
  border-bottom: 3px solid #4b515d;
`

const EnvelopeField = styled.div`
  display: flex;
  flex-direction: column;
  align-items: center;
  width: 43px;
`

const UnitLabel = styled.span`
  ${pixelType}
  color: #eef0f4;
  white-space: nowrap;
`

const Unit = styled.div`
  height: 38px;
  padding: 3px 16px;
  border: 1px solid #14161b;
  background: #7f899b;
`

const UnitInset = styled.div`
  display: flex;
  height: 30px;
  padding: 0 15px;
  border: solid #2b2f38;
  border-width: 2px 1px 1px 2px;
  background-color: #7f899b;
  background-image: linear-gradient(#59606e, #59606e),
    repeating-linear-gradient(#5b6372 0 1px, #9aa3b3 1px 2px, #7f899b 2px 4px),
    repeating-linear-gradient(#5b6372 0 1px, #9aa3b3 1px 2px, #7f899b 2px 4px);
  background-repeat: no-repeat;
  background-size: calc(100% - 28px) 8px, 10px 24px, 10px 24px;
  background-position: 14px 100%, 2px 2px, calc(100% - 2px) 2px;
`

const UnitSlot = styled.div`
  width: 35px;
  padding-top: 3px;
`

const BypassWell = styled.div`
  width: 28px;
  padding: 1px;
  background: #c7a5ab;
`

const KnobColumn = styled.div`
  display: flex;
  flex-direction: column;
  justify-content: flex-end;
  width: 43px;
  height: 27px;
  ${UnitLabel} {
    margin: -1px 0 0 4px;
  }
`

const Groove = styled.div`
  height: 11px;
  border: solid #4b515d;
  border-width: 3px 0 4px;
  background: linear-gradient(#23262d 1px, #7a8393 1px 3px, #23262d 3px);
`

const LogoUnit = styled.div`
  display: flex;
  justify-content: space-between;
  height: 76px;
  padding: 7px 8px;
  border: 1px solid #14161b;
  background: #7f899b;
`

const LogoVent = styled.i`
  width: 21px;
  background: repeating-linear-gradient(#5f6777 0 1px, #98a1b1 1px 2px, transparent 2px 4px);
`

const Logo = styled.strong`
  display: flex;
  align-self: flex-end;
  align-items: center;
  color: #3b414d;
  font-size: 17px;
  font-weight: 400;
  line-height: 18px;
`

/* player */

const PlayerBar = styled.footer`
  display: flex;
  align-items: flex-start;
  height: 40px;
  padding: 3px 0 0 5px;
  border-top: 2px solid #8b929f;
  background: linear-gradient(#5f6673, #767e8e 8px);
`

const lcdGrid = css`
  background: repeating-linear-gradient(#142630 0 1px, transparent 1px 3px),
    repeating-linear-gradient(90deg, #142630 0 1px, #243e4a 1px 3px);
  box-shadow: inset 0 0 0 1px #20262c;
`

const TimeDisplay = styled.div`
  ${lcdGrid}
  width: 123px;
  height: 32px;
  padding: 5px 2px 0 0;
  color: #8fabb3;
`

const TimeDigits = styled.div`
  display: flex;
  justify-content: flex-end;
  align-items: baseline;
  height: 18px;
  font: 16px/18px "DejaVu Sans Mono", monospace;
  small {
    font: 14px/18px "DejaVu Sans", sans-serif;
  }
`

const TimeUnits = styled.div`
  ${pixelType}
  display: flex;
  justify-content: space-between;
  padding-left: 18px;
`

const Transport = styled.div`
  display: flex;
  flex-direction: column;
  gap: 3px;
  width: 131px;
  padding: 1px 0 0 6px;
`

const TransportGroove = styled.div`
  width: 90px;
  height: 7px;
  border: solid #454b57;
  border-width: 1px 3px;
  background: linear-gradient(#16181d, #23262d);
`

const TransportButtons = styled.div`
  display: flex;
  align-items: center;
  gap: 4px;
`

const TransportButton = styled.button`
  display: flex;
  align-items: center;
  justify-content: center;
  width: ${(_) => (_.$wide ? 24 : 19)}px;
  height: 16px;
  border: 2px solid ${(_) => (_.$on ? "#1d3c6c" : "#2b2e35")};
  border-radius: 2px;
  background: ${(_) => (_.$on ? "linear-gradient(#9acbfb, #5ea8ee)" : "linear-gradient(#dcdee2, #a4a8b0)")};
`

const PlayerRack = styled.div`
  ${ribs}
  display: flex;
  flex-direction: column;
  gap: 1px;
  height: 33px;
  padding: 1px 6px;
  border: solid #101216;
  border-width: 0 1px;
  background-color: #818b9d;
  background-size: 3px 22px;
  background-position: 1px center, calc(100% - 1px) center;
`

const ModeRow = styled.div`
  ${pixelType}
  display: flex;
  align-items: center;
  gap: 4px;
  width: 58px;
  height: 9px;
  padding-left: 2px;
  background: #0b0c0f;
  color: #f0f2f5;
`

const Lamp = styled.i`
  width: 7px;
  height: 5px;
  background: ${(_) => (_.$on ? "#8fd0ff" : "#5a5f69")};
`

const TempoRack = styled(PlayerRack)`
  flex-direction: row;
  gap: 5px;
  padding: 1px 9px;
`

const TempoButtons = styled.div`
  display: flex;
  flex-direction: column;
  align-items: center;
  justify-content: space-between;
  padding-top: 3px;
`

const TempoDisplay = styled.div`
  ${lcdGrid}
  ${pixelType}
  width: 80px;
  height: 31px;
  padding: 1px 2px;
  color: #8fabb3;
  text-align: right;
`

const TempoDigits = styled.div`
  height: 21px;
  padding-right: 4px;
  border-bottom: 1px dotted #8fabb3;
  font: 18px/19px "DejaVu Sans Mono", monospace;
`

const CpuMeter = styled.div`
  width: 76px;
  height: 8px;
  padding: 1px;
  background: #0b0c0f;
  i {
    display: block;
    width: 3px;
    height: 5px;
    background: #2f9a35;
  }
`

const MidiRow = styled.div`
  ${pixelType}
  display: flex;
  align-items: center;
  gap: 4px;
  height: 10px;
  color: #f0f2f5;
  background: #3f444e;
`

const MidiLamp = styled.span`
  display: flex;
  align-items: center;
  gap: 4px;
  height: 10px;
  padding: 0 2px;
  background: #0b0c0f;
`
